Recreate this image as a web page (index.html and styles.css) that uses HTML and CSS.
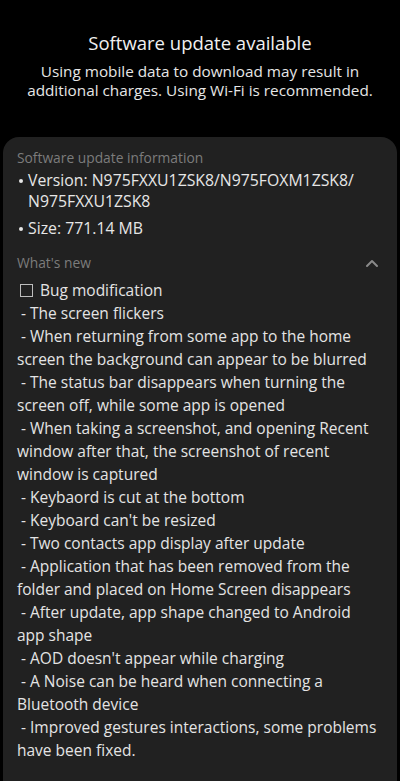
FILE: index.html
```html
<!DOCTYPE html>
<html>
<head>
<meta charset="utf-8">
<link rel="stylesheet" href="styles.css">
</head>
<body>
<header class="top">
  <h1 class="title">Software update available</h1>
  <p class="subtitle">Using mobile data to download may result in additional charges. Using Wi-Fi is recommended.</p>
</header>
<main class="card">
  <section class="info">
    <div class="section-head"><span>Software update information</span></div>
    <ul class="bullets">
      <li>Version: N975FXXU1ZSK8/N975FOXM1ZSK8/ N975FXXU1ZSK8</li>
      <li>Size: 771.14 MB</li>
    </ul>
  </section>
  <section class="news">
    <div class="section-head"><span>What's new</span>
      <svg class="chev" width="14" height="10" viewBox="0 0 14 10"><path d="M2 8 L7 3 L12 8" fill="none" stroke="#8a8a8a" stroke-width="2" stroke-linecap="round" stroke-linejoin="round"/></svg>
    </div>
    <div class="notes">
      <p class="note"><span class="box"></span>Bug modification</p>
      <p class="note">&nbsp;- The screen flickers</p>
      <p class="note">&nbsp;- When returning from some app to the home screen the background can appear to be blurred</p>
      <p class="note">&nbsp;- The status bar disappears when turning the screen off, while some app is opened</p>
      <p class="note">&nbsp;- When taking a screenshot, and opening Recent window after that, the screenshot of recent window is captured</p>
      <p class="note">&nbsp;- Keybaord is cut at the bottom</p>
      <p class="note">&nbsp;- Keyboard can't be resized</p>
      <p class="note">&nbsp;- Two contacts app display after update</p>
      <p class="note">&nbsp;- Application that has been removed from the folder and placed on Home Screen disappears</p>
      <p class="note">&nbsp;- After update, app shape changed to Android app shape</p>
      <p class="note">&nbsp;- AOD doesn't appear while charging</p>
      <p class="note">&nbsp;- A Noise can be heard when connecting a Bluetooth device</p>
      <p class="note">&nbsp;- Improved gestures interactions, some problems have been fixed.</p>
    </div>
  </section>
</main>
</body>
</html>
```

FILE: styles.css
```css
html, body {
  margin: 0;
  padding: 0;
  background: #000;
  height: 100%;
  overflow: hidden;
}
body {
  font-family: "Open Sans", Roboto, sans-serif;
  color: #e6e6e6;
  display: flex;
  flex-direction: column;
}
.top {
  padding: 30px 14px 0;
  height: 107px;
  text-align: center;
}
.title {
  margin: 0;
  font-size: 18.5px;
  font-weight: 400;
  line-height: 26px;
  color: #f0f0f0;
}
.subtitle {
  margin: 6px 0 0;
  font-size: 15.3px;
  line-height: 19px;
  color: #e6e6e6;
}
.card {
  flex: 1;
  margin: 0 3px;
  background: #212121;
  border-radius: 16px 16px 0 0;
  padding: 11px 17px 0 14px;
}
.section-head {
  display: flex;
  align-items: center;
  justify-content: space-between;
  font-size: 13.8px;
  line-height: 20px;
  color: #7c7c7c;
}
.chev {
  margin-right: 1px;
}
.bullets {
  list-style: none;
  margin: 2px 0 0;
  padding: 0;
  font-size: 15.8px;
  line-height: 21px;
}
.bullets li {
  position: relative;
  padding-left: 11px;
  margin-bottom: 6px;
}
.bullets li::before {
  content: "";
  position: absolute;
  left: 2px;
  top: 9px;
  width: 4px;
  height: 4px;
  border-radius: 50%;
  background: #e6e6e6;
}
.news {
  margin-top: 14px;
}
.notes {
  margin-top: 6px;
}
.note {
  margin: 0;
  font-size: 15.5px;
  line-height: 23px;
  color: #e4e4e4;
}
.box {
  display: inline-block;
  width: 11px;
  height: 11px;
  border: 1.5px solid #bdbdbd;
  margin: 0 7px 0 3px;
  vertical-align: -1px;
}
```
